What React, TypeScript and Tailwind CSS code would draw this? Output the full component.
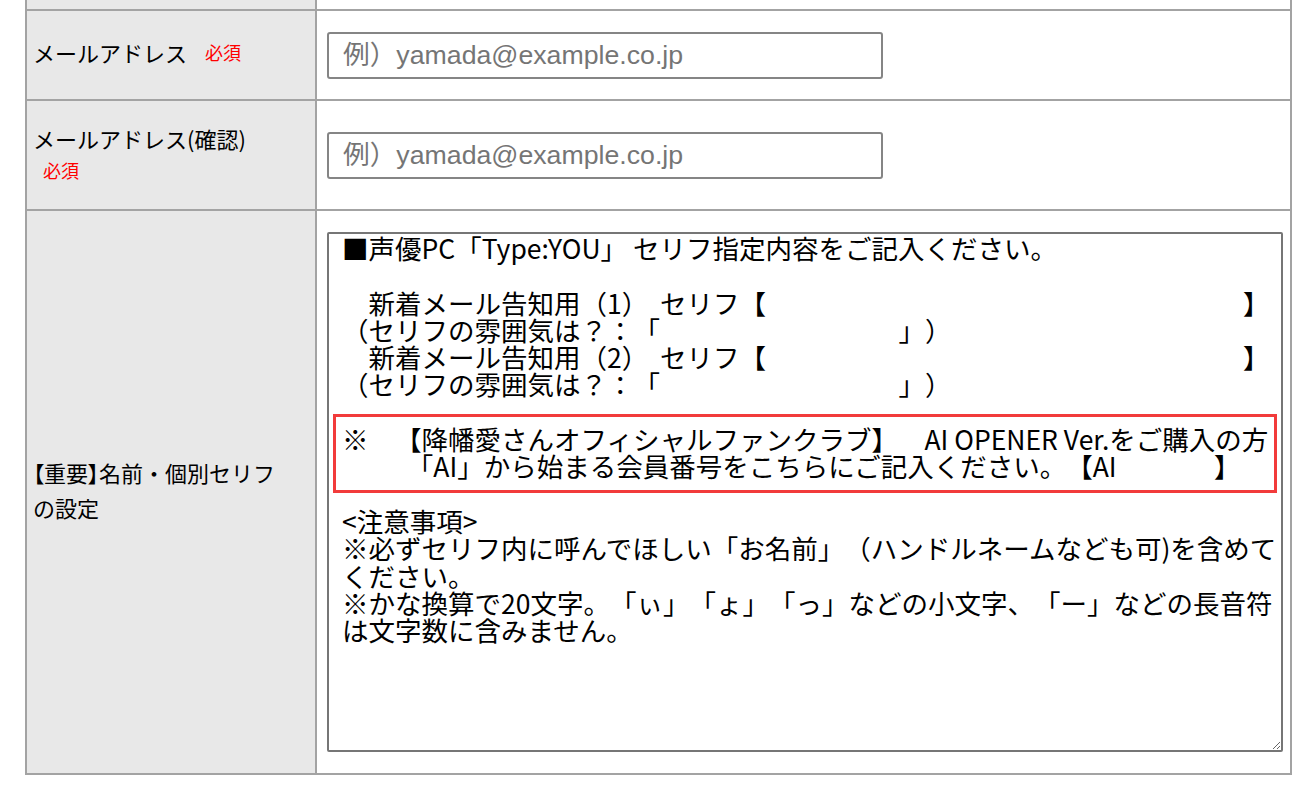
import React from 'react';

const FW = '\u3000';

const serifText = [
  '■声優PC「Type:YOU」 セリフ指定内容をご記入ください。',
  '',
  `${FW}新着メール告知用（1）  セリフ【${FW.repeat(18)}】`,
  `（セリフの雰囲気は？：「${FW.repeat(9)}」）`,
  `${FW}新着メール告知用（2）  セリフ【${FW.repeat(18)}】`,
  `（セリフの雰囲気は？：「${FW.repeat(9)}」）`,
  '',
  `※${FW}【降幡愛さんオフィシャルファンクラブ】${FW}AI OPENER Ver.をご購入の方`,
  `${FW}${FW}  「AI」から始まる会員番号をこちらにご記入ください。【AI${FW.repeat(3)}   】`,
  '',
  '<注意事項>',
  '※必ずセリフ内に呼んでほしい「お名前」（ハンドルネームなども可)を含めて',
  'ください。',
  '※かな換算で20文字。「ぃ」「ょ」「っ」などの小文字、「ー」などの長音符',
  'は文字数に含みません。',
].join('\n');

function Required({ className = '' }: { className?: string }) {
  return <span className={`text-[18px] text-[#ff0000] ${className}`}>必須</span>;
}

function EmailInput() {
  return (
    <input
      type="email"
      placeholder="例）yamada@example.co.jp"
      className="w-[556px] h-[47px] border-2 border-[#858585] rounded-[3px] bg-white pl-[14px] text-[26.7px] font-['Liberation_Sans','Noto_Sans_CJK_JP',sans-serif] placeholder:text-[#757575] outline-none"
    />
  );
}

export default function App() {
  return (
    <div className="min-h-screen bg-white pl-[25px] text-black font-['Noto_Sans_CJK_JP',sans-serif]">
      <div className="w-[1267px] border-x-2 border-b-2 border-[#a3a3a3]">
        {/* row above, cut off by the viewport */}
        <div className="flex h-[9px]">
          <div className="w-[288px] bg-[#e8e8e8]" />
          <div className="flex-1 border-l-2 border-[#a3a3a3]" />
        </div>

        {/* メールアドレス */}
        <div className="flex h-[90px] border-t-2 border-[#a3a3a3]">
          <div className="w-[288px] bg-[#e8e8e8] flex items-center pl-[6px] pb-[5px] text-[22px]">
            <span>メールアドレス</span>
            <Required className="ml-[18px]" />
          </div>
          <div className="flex-1 border-l-2 border-[#a3a3a3] flex items-center pl-[10px]">
            <EmailInput />
          </div>
        </div>

        {/* メールアドレス(確認) */}
        <div className="flex h-[110px] border-t-2 border-[#a3a3a3]">
          <div className="w-[288px] bg-[#e8e8e8] flex flex-col justify-center pl-[6px] pb-[2px]">
            <span className="text-[22px] leading-[32px]">メールアドレス(確認)</span>
            <span className="leading-[32px] pl-[10px]">
              <Required />
            </span>
          </div>
          <div className="flex-1 border-l-2 border-[#a3a3a3] flex items-center pl-[10px]">
            <EmailInput />
          </div>
        </div>

        {/* 名前・個別セリフ */}
        <div className="flex border-t-2 border-[#a3a3a3]">
          <div className="w-[288px] bg-[#e8e8e8] flex items-center pl-[6px] pr-[6px] pb-[4px] text-[22px] leading-[35px]">
            <p>
              <span className="[font-feature-settings:'palt']">【重要】</span>名前・個別セリフ
              <br />
              の設定
            </p>
          </div>
          <div className="flex-1 border-l-2 border-[#a3a3a3] pl-[10px] py-[21px]">
            <div className="relative w-[956px]">
              <textarea
                defaultValue={serifText}
                wrap="off"
                className="block w-[956px] h-[520px] border-2 border-[#767676] rounded-[2px] bg-white pl-[13px] pr-0 pt-0 text-[26.5px] leading-[27.3px] text-black overflow-hidden whitespace-pre outline-none [text-spacing-trim:space-all]"
              />
              <div className="pointer-events-none absolute left-[6px] top-[182px] w-[944px] h-[79px] border-[3px] border-[#f23b3b]" />
            </div>
          </div>
        </div>
      </div>
    </div>
  );
}
